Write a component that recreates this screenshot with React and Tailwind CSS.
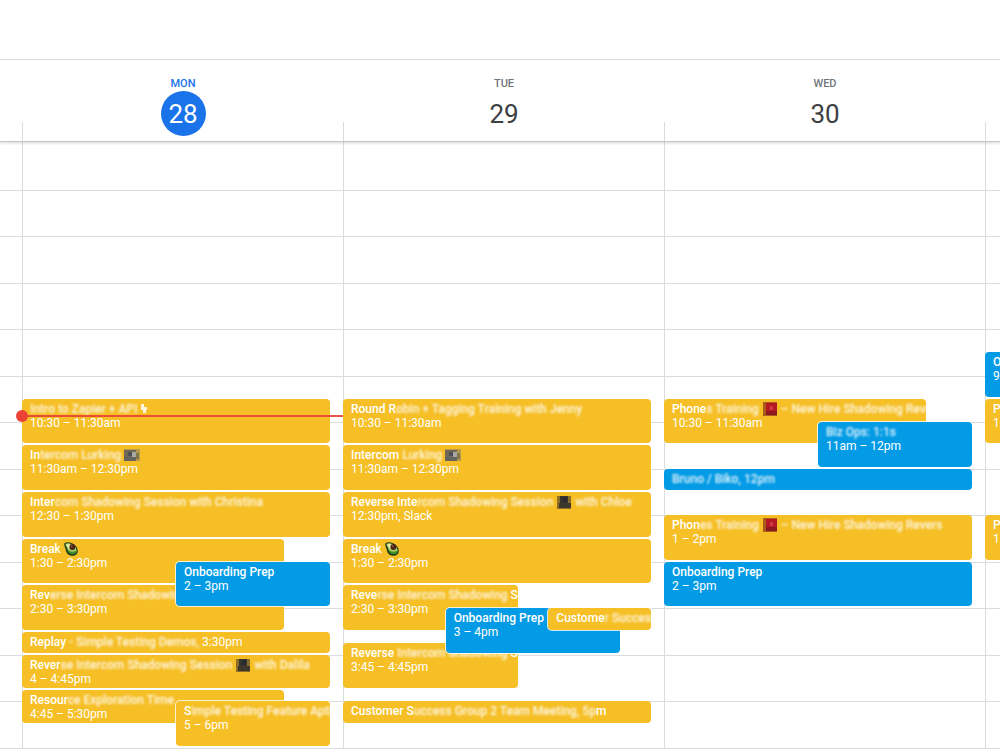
import React from "react";

const FIRST_HOUR = 5;
const HOURS = 13;

// Hidden words are wrapped in [brackets]; pictograms are written as {name}.
const days = [
  {
    name: "MON",
    date: "28",
    today: true,
    now: 10.87,
    events: [
      { from: 10.5, to: 11.5, title: "[Intro to Zapier + API ]{spark}", time: "10:30 – 11:30am" },
      { from: 11.5, to: 12.5, title: "In[tercom Lurking] {camera}", time: "11:30am – 12:30pm" },
      { from: 12.5, to: 13.5, title: "Inter[com Shadowing Session with Christina]", time: "12:30 – 1:30pm" },
      { from: 13.5, to: 14.5, right: 51, title: "Break {avocado}", time: "1:30 – 2:30pm" },
      { from: 14.5, to: 15.5, right: 51, title: "Rev[erse Intercom Shadowing]", time: "2:30 – 3:30pm" },
      { from: 14, to: 15, left: 30, blue: true, title: "Onboarding Prep", time: "2 – 3pm" },
      { from: 15.5, to: 16, title: "Replay [- Simple Testing Demos,]", time: "3:30pm", inline: true },
      { from: 16, to: 16.75, title: "Rever[se Intercom Shadowing Session] {hat} [with Dalila]", time: "4 – 4:45pm" },
      { from: 16.75, to: 17.5, right: 51, title: "Resour[ce Exploration Time]", time: "4:45 – 5:30pm" },
      { from: 17, to: 18, left: 30, title: "S[imple Testing Feature Aptit]", time: "5 – 6pm" },
    ],
  },
  {
    name: "TUE",
    date: "29",
    events: [
      { from: 10.5, to: 11.5, title: "Round R[obin + Tagging Training with Jenny]", time: "10:30 – 11:30am" },
      { from: 11.5, to: 12.5, title: "Intercom [Lurking] {camera}", time: "11:30am – 12:30pm" },
      { from: 12.5, to: 13.5, title: "Reverse Inte[rcom Shadowing Session] {hat} [with Chloe]", time: "12:30pm, Slack" },
      { from: 13.5, to: 14.5, title: "Break {avocado}", time: "1:30 – 2:30pm" },
      { from: 14.5, to: 15.5, right: 34, title: "Reve[rse Intercom Shadowing ]Se", time: "2:30 – 3:30pm" },
      { from: 15.75, to: 16.75, right: 34, title: "Reverse [Intercom Shadowing ]Se", time: "3:45 – 4:45pm" },
      { from: 15, to: 16, left: 20, right: 54, blue: true, title: "Onboarding Prep", time: "3 – 4pm" },
      { from: 15, to: 15.5, left: 40, title: "Custome[r Success]" },
      { from: 17, to: 17.5, title: "Customer S[uccess Group 2 Team Meeting, 5p]m" },
    ],
  },
  {
    name: "WED",
    date: "30",
    events: [
      { from: 10.5, to: 11.5, right: 51, title: "Phone[s Training] {phone} [– New Hire Shadowing Rever]", time: "10:30 – 11:30am" },
      { from: 11, to: 12, left: 30, blue: true, title: "[Biz Ops: 1:1s]", time: "11am – 12pm" },
      { from: 12, to: 12.5, blue: true, title: "[Bruno / Biko, 12pm]" },
      { from: 13, to: 14, title: "Phon[es Training] {phone} [– New Hire Shadowing Revers]", time: "1 – 2pm" },
      { from: 14, to: 15, blue: true, title: "Onboarding Prep", time: "2 – 3pm" },
    ],
  },
];

const nextDayEvents = [
  { from: 9.5, to: 10.5, blue: true, title: "Onboarding", time: "9:30 – 10:30am" },
  { from: 10.5, to: 11.5, title: "Phones", time: "10:30 – 11:30am" },
  { from: 13, to: 14, title: "Phones", time: "1 – 2pm" },
];

function Pictogram({ name }) {
  const box = "inline-block h-[14px] w-4 align-top";
  if (name === "avocado") {
    return (
      <svg viewBox="0 0 14 14" className="inline-block size-[14px] align-top" role="img" aria-label="avocado">
        <path d="M.8.9C2.600-.3 5.600.2 8.200 1.300c3.400 1.500 5.600 4.500 5.600 7.700 0 3.200-2.600 5-5.800 4.800-3.600-.2-5.600-2.600-6.200-5.800C1.400 5.600-.8 2.600.8.9Z" fill="#1d3f17" />
        <path d="M1.700 1.800C3 .9 5.800 1.200 8 2.300c2.800 1.400 4.600 3.900 4.600 6.300 0 2.300-2 3.500-4.300 3.200-2.900-.3-4.400-2.500-5-5.100C2.900 4.700.9 3.100 1.700 1.800Z" fill="#a9c963" />
        <path d="M2.400 2.300c1.100-.6 2.600-.3 3.900.3L4.500 7.200C4 5 1.700 3.700 2.400 2.300Z" fill="#e4e8ac" />
        <path d="M3.300 7.300c1.900 2.600 5.600 3.400 9.300 1.300 0 2.700-2 3.900-4.300 3.700-2.700-.2-4.500-2-5-5Z" fill="#3f8e2d" />
        <circle cx="8.400" cy="5" r="2.900" fill="#4b2618" />
        <circle cx="7.700" cy="4.200" r=".9" fill="#94614a" />
      </svg>
    );
  }
  if (name === "camera") {
    return (
      <svg viewBox="0 0 16 14" className={box} aria-hidden="true">
        <rect y="1" width="16" height="12" fill="#b59a50" />
        <rect y="2" width="12" height="11" fill="#716956" />
        <rect x="4" y="4" width="4" height="4" fill="#4c5056" />
        <rect x="8" y="4" width="4" height="5" fill="#aaa99f" />
        <rect y="9" width="12" height="4" fill="#65645f" />
        <rect x="12" y="5" width="3" height="6" fill="#85764b" />
      </svg>
    );
  }
  if (name === "hat") {
    return (
      <svg viewBox="0 0 16 14" className={box} aria-hidden="true">
        <rect x="1" y="1" width="14" height="13" fill="#8b6e29" />
        <rect x="4" y="1" width="8" height="9" fill="#37332f" />
        <rect x="3" y="8" width="12" height="5" fill="#3e382c" />
        <rect x="7" y="2" width="4" height="5" fill="#292b30" />
      </svg>
    );
  }
  if (name === "phone") {
    return (
      <svg viewBox="0 0 16 14" className={box} aria-hidden="true">
        <rect x="1" width="14" height="14" fill="#a95b1c" />
        <rect x="4" y="1" width="11" height="9" fill="#b81824" />
        <rect x="4" y="9" width="11" height="4" fill="#8c1820" />
        <rect x="8" y="4" width="3" height="4" fill="#c93a46" />
      </svg>
    );
  }
  return (
    <svg viewBox="0 0 8 12" className="inline-block h-3 w-2 align-top" aria-hidden="true">
      <path d="M1 2h3v3h3v3H6v3H3V8H1Z" fill="#fff" opacity=".85" />
    </svg>
  );
}

function Title({ text }) {
  const parts = text.split(/(\[[^\]]*\]|\{[^}]*\})/).filter(Boolean);
  return parts.map((part, i) => {
    if (part[0] === "{") return <Pictogram key={i} name={part.slice(1, -1)} />;
    if (part[0] === "[")
      return (
        <span key={i} className="opacity-90 blur-[1px]">
          {part.slice(1, -1)}
        </span>
      );
    return <span key={i}>{part}</span>;
  });
}

function Event({ event }) {
  const { from, to, left = 0, right = 60, blue, title, time, inline } = event;
  const row = (hour) => (hour - FIRST_HOUR) * 4 + 1;
  return (
    <button
      type="button"
      className={`isolate mb-0.5 flex min-w-0 flex-col items-start overflow-hidden rounded pt-[3px] pl-2 text-left text-xs leading-[14px] whitespace-nowrap text-white ${
        blue ? "bg-[#039be5]" : "bg-[#f6bf26]"
      } ${left > 0 ? "ring-1 ring-white/80" : ""}`}
      style={{ gridArea: `${row(from)} / ${left + 1} / ${row(to)} / ${right + 1}` }}
    >
      <span className="font-medium">
        <Title text={title} />
        {inline && <span className="font-normal"> {time}</span>}
      </span>
      {time && !inline && <span>{time}</span>}
    </button>
  );
}

function EventGrid({ events, className }) {
  return (
    <div className={`grid h-full grid-cols-[repeat(60,minmax(0,1fr))] grid-rows-[repeat(52,minmax(0,1fr))] ${className}`}>
      {events.map((event, i) => (
        <Event key={i} event={event} />
      ))}
    </div>
  );
}

function NowLine({ hour }) {
  return (
    <div
      className="pointer-events-none absolute inset-x-0 flex h-3 -translate-y-1/2 items-center"
      style={{ top: `${((hour - FIRST_HOUR) / HOURS) * 100}%` }}
    >
      <span className="-ml-1.5 size-3 shrink-0 rounded-full bg-[#ea4335]" />
      <span className="h-0.5 flex-1 bg-[#ea4335]/90" />
    </div>
  );
}

export default function App() {
  return (
    <div className="min-h-screen overflow-hidden bg-white font-['Roboto',sans-serif] text-[#3c4043]">
      <div className="h-[59px]" />
      <header className="relative flex border-t border-b border-t-[#dadce0] border-b-[#c4c6c9] pl-[22px] shadow-[0_2px_2px_rgba(0,0,0,0.1)]">
        {days.map((day) => (
          <div key={day.name} className="flex min-w-0 flex-1 items-end">
            <span className="h-[19px] w-px bg-[#dadce0]" />
            <h2 className="flex flex-1 flex-col items-center pt-4 pb-[5px]">
              <span className={`text-[11px] leading-[15px] font-medium ${day.today ? "text-[#1a73e8]" : "text-[#70757a]"}`}>
                {day.name}
              </span>
              <span
                className={`flex size-[45px] items-center justify-center rounded-full text-[26px] leading-none ${
                  day.today ? "bg-[#1a73e8] text-white" : ""
                }`}
              >
                {day.date}
              </span>
            </h2>
          </div>
        ))}
        <div className="flex w-[15px] items-end">
          <span className="h-[19px] w-px bg-[#dadce0]" />
        </div>
      </header>

      <main className="grid">
        <div className="col-start-1 row-start-1 grid h-[607px] grid-rows-[repeat(13,minmax(0,1fr))] pt-0.5">
          {Array.from({ length: HOURS }, (_, i) => (
            <div key={i} className="border-b border-[#dadce0]" />
          ))}
        </div>
        <div className="col-start-1 row-start-1 flex min-w-0 pl-[22px]">
          {days.map((day) => (
            <section key={day.name} className="grid min-w-0 flex-1">
              <div className="col-start-1 row-start-1 w-px bg-[#dadce0]" />
              <div className="relative col-start-1 row-start-1 pt-px pb-px">
                <EventGrid events={day.events} className="pr-[13px]" />
                {day.now && <NowLine hour={day.now} />}
              </div>
            </section>
          ))}
          <section className="grid w-[15px] overflow-hidden">
            <div className="col-start-1 row-start-1 w-px bg-[#dadce0]" />
            <div className="col-start-1 row-start-1 w-77 pt-px pb-px">
              <EventGrid events={nextDayEvents} className="" />
            </div>
          </section>
        </div>
      </main>
    </div>
  );
}
